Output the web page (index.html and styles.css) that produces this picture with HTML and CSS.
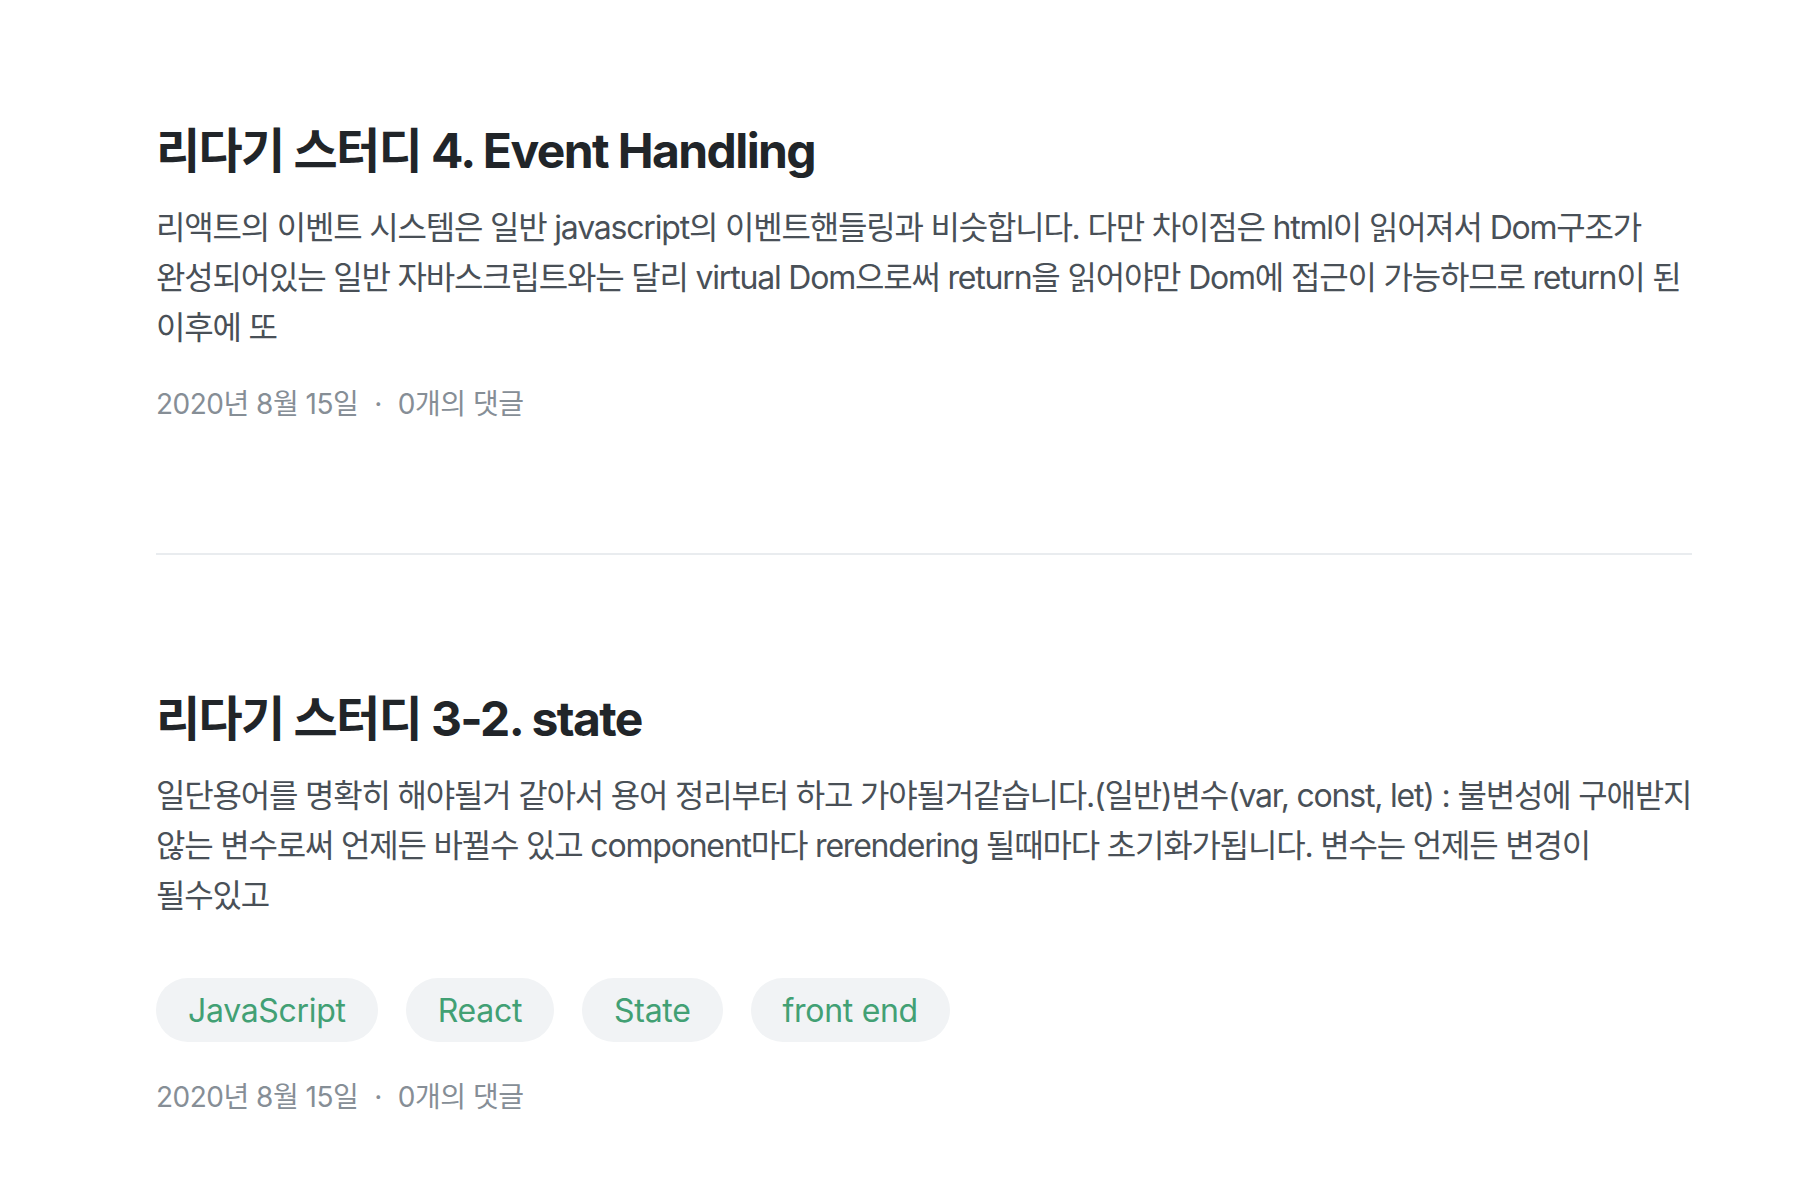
FILE: index.html
```html
<!DOCTYPE html>
<html lang="ko">
<head>
<meta charset="utf-8">
<title>velog posts</title>
<link rel="stylesheet" href="styles.css">
</head>
<body>
<main class="post-list">
  <article class="post-card">
    <h2 class="post-title">리다기 스터디 4. Event Handling</h2>
    <p class="post-desc">리액트의 이벤트 시스템은 일반 javascript의 이벤트핸들링과 비슷합니다. 다만 차이점은 html이 읽어져서 Dom구조가<br>완성되어있는 일반 자바스크립트와는 달리 virtual Dom으로써 return을 읽어야만 Dom에 접근이 가능하므로 return이 된<br>이후에 또</p>
    <div class="sub-info">
      <span>2020년 8월 15일</span>
      <span class="separator">·</span>
      <span>0개의 댓글</span>
    </div>
  </article>
  <article class="post-card">
    <h2 class="post-title">리다기 스터디 3-2. state</h2>
    <p class="post-desc">일단용어를 명확히 해야될거 같아서 용어 정리부터 하고 가야될거같습니다.(일반)변수(var, const, let) : 불변성에 구애받지<br>않는 변수로써 언제든 바뀔수 있고 component마다 rerendering 될때마다 초기화가됩니다. 변수는 언제든 변경이<br>될수있고</p>
    <div class="tags">
      <a class="tag">JavaScript</a>
      <a class="tag">React</a>
      <a class="tag">State</a>
      <a class="tag">front end</a>
    </div>
    <div class="sub-info">
      <span>2020년 8월 15일</span>
      <span class="separator">·</span>
      <span>0개의 댓글</span>
    </div>
  </article>
</main>
</body>
</html>
```

FILE: styles.css
```css
html, body {
  margin: 0;
  padding: 0;
  background: #ffffff;
}

body {
  font-family: "Inter", "Noto Sans CJK KR", sans-serif;
  font-feature-settings: "palt";
  overflow: hidden;
}

.post-list {
  width: 1536px;
  margin-left: 156px;
  margin-top: -13px;
}

.post-card {
  padding: 128px 0;
}

.post-card + .post-card {
  border-top: 2px solid #e9ecef;
}

.post-title {
  margin: 0;
  font-size: 48px;
  line-height: 72px;
  font-weight: 700;
  color: #212529;
  letter-spacing: -1.6px;
}

.post-desc {
  margin: 16px 0 0;
  font-size: 32px;
  line-height: 50px;
  color: #495057;
  letter-spacing: -1.2px;
  white-space: nowrap;
}

.tags {
  display: flex;
  flex-wrap: wrap;
  gap: 28px;
  margin-top: 57px;
}

.tag {
  display: inline-flex;
  align-items: center;
  height: 64px;
  padding: 0 32px;
  border-radius: 32px;
  background: #f1f3f5;
  color: #42a074;
  font-size: 32px;
  font-weight: 400;
  letter-spacing: -0.3px;
}

.sub-info {
  display: flex;
  align-items: center;
  margin-top: 30px;
  font-size: 28px;
  line-height: 42px;
  color: #868e96;
  letter-spacing: -0.5px;
}

.tags + .sub-info {
  margin-top: 34px;
}

.separator {
  margin: 0 16px;
}
```
